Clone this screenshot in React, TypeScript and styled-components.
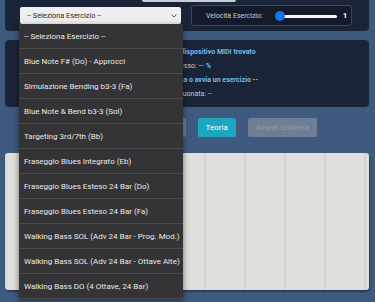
import React from "react";
import styled, { createGlobalStyle } from "styled-components";

const GlobalStyle = createGlobalStyle`
  html, body {
    margin: 0;
    padding: 0;
    background: #3e5a7e;
  }
  body {
    font-family: Roboto, "Noto Sans", "Liberation Sans", sans-serif;
    overflow: hidden;
  }
`;

const exercises = [
	"-- Seleziona Esercizio --",
	"Blue Note F# (Do) - Approcci",
	"Simulazione Bending b3-3 (Fa)",
	"Blue Note & Bend b3-3 (Sol)",
	"Targeting 3rd/7th (Bb)",
	"Fraseggio Blues Integrato (Eb)",
	"Fraseggio Blues Esteso 24 Bar (Do)",
	"Fraseggio Blues Esteso 24 Bar (Fa)",
	"Walking Bass SOL (Adv 24 Bar - Prog. Mod.)",
	"Walking Bass SOL (Adv 24 Bar - Ottave Alte)",
	"Walking Bass DO (4 Ottave, 24 Bar)",
];

const App = () => (
	<>
		<GlobalStyle />
		<Page>
			<TopPanel>
				<TitleTab />
				<Controls>
					<Select>
						<span>-- Seleziona Esercizio --</span>
						<svg width="6" height="4" viewBox="0 0 6 4">
							<path d="M0.5 0.5 L3 3 L5.5 0.5" fill="none" stroke="#555" strokeWidth="1" />
						</svg>
					</Select>
					<SpeedBox>
						<SpeedLabel>Velocità Esercizio:</SpeedLabel>
						<Slider>
							<Track />
							<Thumb />
						</Slider>
						<SpeedValue>1</SpeedValue>
					</SpeedBox>
				</Controls>
			</TopPanel>

			<StatusPanel>
				<Line>
					<Value>Stato MIDI: Nessun dispositivo MIDI trovato</Value>
				</Line>
				<Line>
					Progresso: <Value>-- %</Value>
				</Line>
				<Line>
					<Value>Istruzioni: -- Seleziona o avvia un esercizio --</Value>
				</Line>
				<Line>Nota suonata: --</Line>
			</StatusPanel>

			<ButtonRow>
				<Button disabled>Avvia</Button>
				<Button disabled>Stop</Button>
				<Button $variant="info">Teoria</Button>
				<Button disabled>Avanti Sistema</Button>
			</ButtonRow>

			<Board />

			<Dropdown>
				{exercises.map((name) => (
					<Option key={name}>{name}</Option>
				))}
			</Dropdown>
		</Page>
	</>
);

export default App;

const Page = styled.div`
	position: relative;
	width: 375px;
	height: 302px;
	padding: 0 6px 0 5px;
	box-sizing: border-box;
	overflow: hidden;
`;

const TopPanel = styled.section`
	background: #1a2438;
	border-radius: 0 0 4px 4px;
	padding: 0 16px 5px 15px;
`;

const TitleTab = styled.div`
	width: 94px;
	height: 2px;
	margin-left: 122px;
	background: #c9ced6;
	border-radius: 0 0 2px 2px;
`;

const Controls = styled.div`
	display: grid;
	grid-template-columns: 161px 161px;
	column-gap: 10px;
	align-items: center;
	margin-top: 3px;
`;

const Select = styled.div`
	height: 17px;
	box-sizing: border-box;
	display: flex;
	align-items: center;
	justify-content: space-between;
	padding: 0 4px 0 7px;
	background: #efefef;
	border-radius: 2px;
	font-size: 7.3px;
	color: #2b2b2b;
`;

const SpeedBox = styled.div`
	height: 21px;
	box-sizing: border-box;
	display: flex;
	align-items: center;
	padding: 0 5px 0 14px;
	background: #131b2b;
	border: 1px solid #3a4960;
	border-radius: 3px;
`;

const SpeedLabel = styled.span`
	font-size: 7px;
	color: #c5cbd3;
	white-space: nowrap;
`;

const Slider = styled.div`
	position: relative;
	flex: 0 0 62px;
	height: 10px;
	margin-left: 12px;
`;

const Track = styled.div`
	position: absolute;
	left: 3px;
	right: 0;
	top: 4px;
	height: 3px;
	border-radius: 2px;
	background: #f4f4f4;
`;

const Thumb = styled.div`
	position: absolute;
	left: 0;
	top: 0;
	width: 10px;
	height: 10px;
	border-radius: 50%;
	background: #1a73e8;
`;

const SpeedValue = styled.span`
	margin-left: 6px;
	font-size: 8px;
	font-weight: 700;
	color: #ffffff;
`;

const StatusPanel = styled.section`
	margin-top: 9px;
	padding: 5px 12px 6px;
	background: #1a2438;
	border-radius: 4px;
	text-align: center;
	font-size: 7px;
	line-height: 14px;
	color: #c3c9d1;
`;

const Line = styled.div`
	white-space: nowrap;
`;

const Value = styled.span`
	font-weight: 700;
	color: #74bbea;
`;

const ButtonRow = styled.div`
	display: flex;
	justify-content: flex-end;
	gap: 12px;
	margin-top: 11px;
	padding-right: 52px;
`;

const Button = styled.button<{ $variant?: "info" }>`
	height: 19px;
	padding: 0 8px;
	border: none;
	border-radius: 2px;
	font-family: inherit;
	font-size: 8px;
	background: ${({ $variant }) => ($variant === "info" ? "#1ea5c0" : "#6e7e94")};
	color: ${({ $variant }) => ($variant === "info" ? "#ffffff" : "#8e9cb0")};
`;

const Board = styled.section`
	margin-top: 16px;
	height: 137px;
	border-radius: 3px;
	background-color: #dfe0db;
	background-image: linear-gradient(90deg, #d2d3ce 0 2px, transparent 2px);
	background-size: 40px 100%;
	background-position: -1px 0;
	box-shadow: 1px 2px 2px rgba(0, 0, 0, 0.35);
`;

const Dropdown = styled.ul`
	position: absolute;
	left: 19px;
	top: 24px;
	width: 164px;
	margin: 0;
	padding: 0;
	list-style: none;
	background: #343436;
	box-shadow: 0 2px 6px rgba(0, 0, 0, 0.5);
`;

const Option = styled.li`
	height: 25px;
	box-sizing: border-box;
	display: flex;
	align-items: center;
	padding-left: 5px;
	border-bottom: 1px solid #4b4b4d;
	font-size: 8px;
	color: #e9e9e9;
	white-space: nowrap;
`;
